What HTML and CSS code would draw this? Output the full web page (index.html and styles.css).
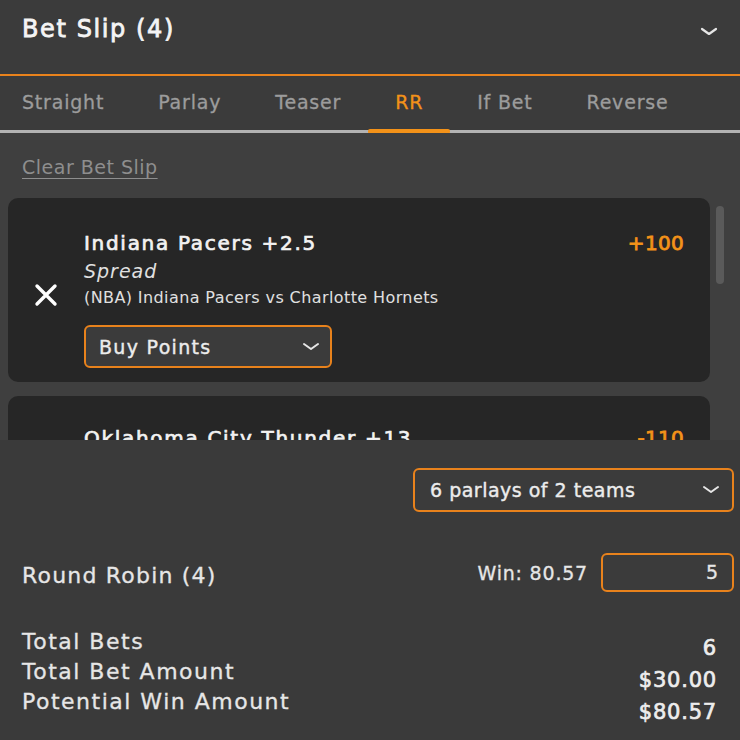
FILE: index.html
```html
<!DOCTYPE html>
<html lang="en">
  <head>
    <meta charset="UTF-8" />
    <meta name="viewport" content="width=device-width, initial-scale=1.0" />
    <title>Bet Slip</title>
    <link rel="stylesheet" href="styles.css">
  </head>
  <body>
    <div class="slip">
      <div class="slip-header">
        <h1>Bet Slip (4)</h1>
        <svg class="chevron" width="18" height="10" viewBox="0 0 18 10">
          <path d="M2 2 L9 7 L16 2" fill="none" stroke="#e6e6e6" stroke-width="2.2" stroke-linecap="round" stroke-linejoin="round" />
        </svg>
      </div>

      <div class="tabs">
        <div class="tab">Straight</div>
        <div class="tab">Parlay</div>
        <div class="tab">Teaser</div>
        <div class="tab active">RR</div>
        <div class="tab">If Bet</div>
        <div class="tab">Reverse</div>
      </div>

      <div class="picks">
        <a class="clear-link" href="#">Clear Bet Slip</a>

        <div class="pick">
          <div class="remove">
            <svg width="24" height="24" viewBox="0 0 24 24">
              <path d="M3 3 L21 21 M21 3 L3 21" stroke="#ffffff" stroke-width="3.4" stroke-linecap="round" />
            </svg>
          </div>
          <div class="pick-body">
            <div class="pick-top">
              <span class="pick-name">Indiana Pacers +2.5</span>
              <span class="odds">+100</span>
            </div>
            <div class="pick-type">Spread</div>
            <div class="pick-game">(NBA) Indiana Pacers vs Charlotte Hornets</div>
            <div class="select small">
              <span>Buy Points</span>
              <svg width="18" height="10" viewBox="0 0 18 10">
                <path d="M2 2 L9 7 L16 2" fill="none" stroke="#e6e6e6" stroke-width="2" stroke-linecap="round" stroke-linejoin="round" />
              </svg>
            </div>
          </div>
        </div>

        <div class="pick">
          <div class="remove"></div>
          <div class="pick-body">
            <div class="pick-top">
              <span class="pick-name">Oklahoma City Thunder +13</span>
              <span class="odds">-110</span>
            </div>
          </div>
        </div>

        <div class="scroll-thumb"></div>
      </div>

      <div class="summary">
        <div class="summary-select">
          <div class="select wide">
            <span>6 parlays of 2 teams</span>
            <svg width="18" height="10" viewBox="0 0 18 10">
              <path d="M2 2 L9 7 L16 2" fill="none" stroke="#e6e6e6" stroke-width="2" stroke-linecap="round" stroke-linejoin="round" />
            </svg>
          </div>
        </div>

        <div class="rr-row">
          <span class="rr-label">Round Robin (4)</span>
          <div class="rr-stake">
            <span class="win">Win: 80.57</span>
            <div class="stake-input">5</div>
          </div>
        </div>

        <div class="totals">
          <div class="totals-labels">
            <div>Total Bets</div>
            <div>Total Bet Amount</div>
            <div>Potential Win Amount</div>
          </div>
          <div class="totals-values">
            <div>6</div>
            <div>$30.00</div>
            <div>$80.57</div>
          </div>
        </div>
      </div>
    </div>
  </body>
</html>
```

FILE: styles.css
```css
* {
  box-sizing: border-box;
}
body {
  margin: 0;
  background-color: #3b3b3b;
  color: #f2f2f2;
  font-family: "DejaVu Sans", Inter, sans-serif;
}
.slip {
  width: 740px;
  height: 740px;
  overflow: hidden;
}
.slip-header {
  display: flex;
  justify-content: space-between;
  align-items: center;
  height: 76px;
  padding: 4px 22px 20px 22px;
  border-bottom: 2px solid #e8821c;
}
.slip-header h1 {
  margin: 0;
  font-size: 24px;
  font-weight: 400;
  letter-spacing: 1.6px;
  -webkit-text-stroke: 0.8px currentColor;
  color: #f4f4f4;
}
.chevron {
  margin-top: 6px;
}
.tabs {
  display: flex;
  margin-left: -5px;
  height: 57px;
  border-bottom: 3px solid #b3b3b3;
}
.tab {
  position: relative;
  display: flex;
  align-items: center;
  padding: 0 27px 2px 27px;
  font-size: 19px;
  letter-spacing: 0.8px;
  -webkit-text-stroke: 0.3px currentColor;
  color: #9c9c9c;
}
.tab.active {
  color: #f39219;
}
.tab.active::after {
  content: "";
  position: absolute;
  left: 0;
  right: 0;
  bottom: -4px;
  height: 5px;
  border-radius: 2px;
  background-color: #f39219;
}
.picks {
  position: relative;
  height: 307px;
  overflow: hidden;
  background-color: #3f3f3f;
  padding-top: 21px;
}
.clear-link {
  display: inline-block;
  margin-left: 22px;
  line-height: 26px;
  font-size: 19px;
  letter-spacing: 0.5px;
  color: #8e8e8e;
  text-decoration: underline;
  text-underline-offset: 4px;
}
.pick {
  display: flex;
  align-items: center;
  margin: 18px 30px 14px 8px;
  padding: 31px 26px 14px 0;
  border-radius: 10px;
  background-color: #262626;
}
.pick + .pick {
  margin-top: 0;
  padding-top: 28px;
}
.remove {
  width: 76px;
  display: flex;
  justify-content: center;
  padding: 0 0 7px 0;
}
.pick-body {
  flex: 1;
}
.pick-top {
  display: flex;
  justify-content: space-between;
  line-height: 28px;
}
.pick-name {
  font-size: 20px;
  letter-spacing: 1.7px;
  -webkit-text-stroke: 0.7px currentColor;
  color: #f2f2f2;
}
.odds {
  font-size: 20px;
  letter-spacing: 0.3px;
  -webkit-text-stroke: 0.8px currentColor;
  color: #f39219;
}
.pick-type {
  line-height: 28px;
  font-size: 19px;
  font-style: italic;
  letter-spacing: 1px;
  color: #e0e0e0;
}
.pick-game {
  line-height: 26px;
  font-size: 16px;
  letter-spacing: 0.4px;
  color: #e0e0e0;
}
.select {
  display: flex;
  justify-content: space-between;
  align-items: center;
  border: 2px solid #e8821c;
  border-radius: 6px;
  background-color: #3b3b3b;
  font-size: 19px;
  -webkit-text-stroke: 0.4px currentColor;
  color: #ececec;
}
.select.small {
  width: 248px;
  height: 43px;
  margin-top: 14px;
  padding: 0 10px 0 13px;
  letter-spacing: 1.3px;
}
.select.wide {
  width: 321px;
  height: 44px;
  padding: 0 12px 0 15px;
  letter-spacing: 0.5px;
}
.scroll-thumb {
  position: absolute;
  left: 716px;
  top: 73px;
  width: 8px;
  height: 78px;
  border-radius: 4px;
  background-color: #5a5a5a;
}
.summary {
  height: 300px;
  padding: 28px 6px 0 22px;
  background-color: #3a3a3a;
}
.summary-select {
  display: flex;
  justify-content: flex-end;
}
.rr-row {
  display: flex;
  justify-content: space-between;
  align-items: center;
  margin-top: 41px;
}
.rr-label {
  padding-top: 5px;
  font-size: 22px;
  letter-spacing: 1.2px;
  -webkit-text-stroke: 0.3px currentColor;
  color: #e6e6e6;
}
.rr-stake {
  display: flex;
  align-items: center;
  gap: 13px;
}
.win {
  font-size: 19px;
  letter-spacing: 0.8px;
  -webkit-text-stroke: 0.3px currentColor;
  color: #e6e6e6;
}
.stake-input {
  width: 133px;
  height: 39px;
  padding: 0 14px;
  border: 2px solid #e8821c;
  border-radius: 6px;
  background-color: #3b3b3b;
  line-height: 35px;
  text-align: right;
  font-size: 19px;
  -webkit-text-stroke: 0.3px currentColor;
  color: #e6e6e6;
}
.totals {
  display: flex;
  justify-content: space-between;
  margin-top: 35px;
  padding-right: 17px;
}
.totals-labels {
  line-height: 30px;
  font-size: 22px;
  letter-spacing: 1.5px;
  -webkit-text-stroke: 0.3px currentColor;
  color: #e6e6e6;
}
.totals-values {
  padding-top: 5px;
  line-height: 32px;
  text-align: right;
  font-size: 21px;
  letter-spacing: 0.8px;
  -webkit-text-stroke: 0.7px currentColor;
  color: #ededed;
}
```
